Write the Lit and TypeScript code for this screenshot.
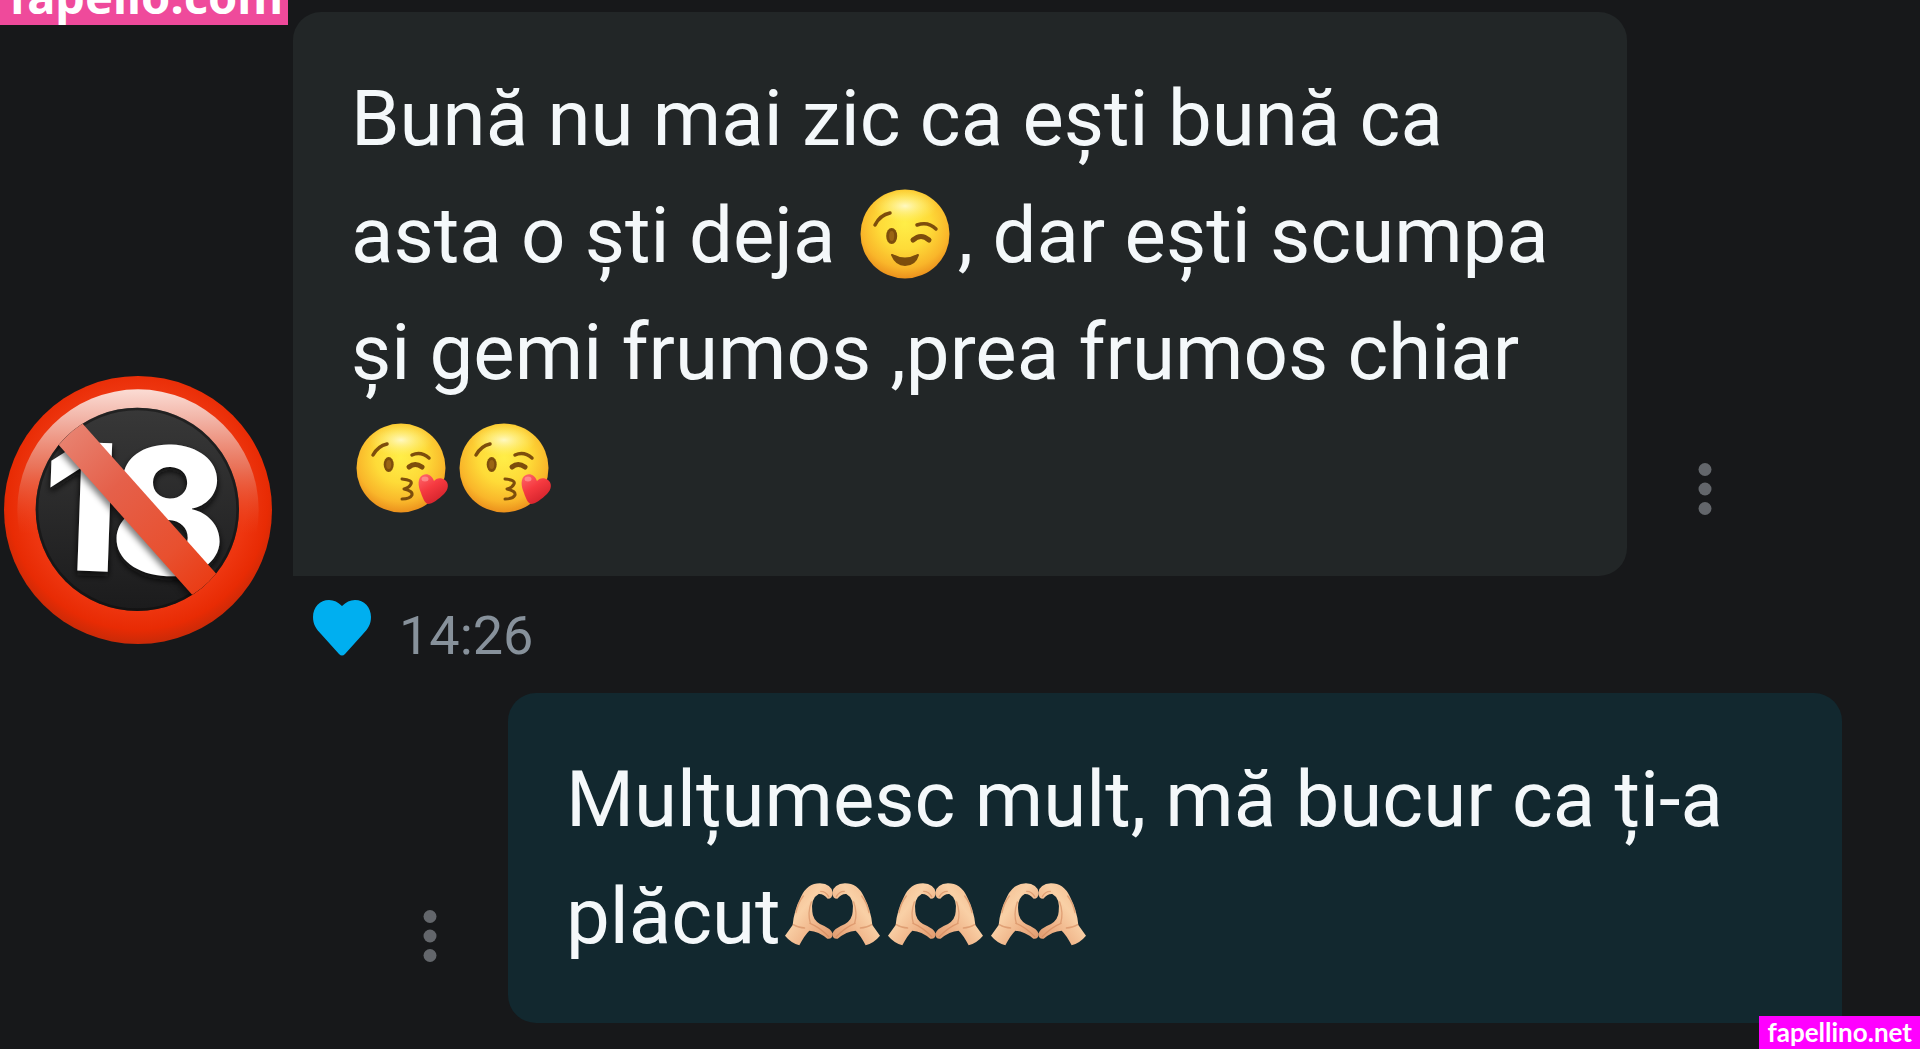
import { LitElement, html, css, svg, nothing } from "lit";
import { customElement, property } from "lit/decorators.js";

const faceFill = svg`
  <defs>
    <radialGradient id="face" cx="50%" cy="38%" r="64%">
      <stop offset="0" stop-color="#ffee48"></stop>
      <stop offset=".45" stop-color="#fedb38"></stop>
      <stop offset=".78" stop-color="#f9b62a"></stop>
      <stop offset="1" stop-color="#e98a1a"></stop>
    </radialGradient>
    <radialGradient id="shine" cx="50%" cy="50%" r="50%">
      <stop offset="0" stop-color="#fffbd0" stop-opacity=".9"></stop>
      <stop offset="1" stop-color="#fff27a" stop-opacity="0"></stop>
    </radialGradient>
  </defs>
  <circle cx="50" cy="45" r="44.5" fill="url(#face)"></circle>
  <ellipse cx="50" cy="17" rx="32" ry="16" fill="url(#shine)"></ellipse>`;

const wink = html`<svg class="emoji" viewBox="0 0 103 90" role="img" aria-label="😉">
  ${faceFill}
  <g fill="none" stroke="#7d4d0c" stroke-width="3.500" stroke-linecap="round">
    <path d="M20 36Q25 26 35 24"></path>
    <path d="M62 36Q73 32 81 40"></path>
    <path stroke-width="5" d="M58 51Q66 44 74 51"></path>
  </g>
  <ellipse cx="36.700" cy="47" rx="5.500" ry="8" fill="#7d4d0c"></ellipse>
  <ellipse cx="36.700" cy="47" rx="2.500" ry="5" fill="#9a6414"></ellipse>
  <path d="M37 66Q50 73 63 66Q60 76 50 76Q41 76 37 66Z" fill="#7d4d0c" stroke="#7d4d0c" stroke-width="2" stroke-linejoin="round"></path>
</svg>`;

const kiss = html`<svg class="emoji" viewBox="0 0 103 90" role="img" aria-label="😘">
  ${faceFill}
  <defs>
    <linearGradient id="love" x1="0" y1="0" x2=".6" y2="1">
      <stop offset="0" stop-color="#ff6a6e"></stop>
      <stop offset=".5" stop-color="#f5393f"></stop>
      <stop offset="1" stop-color="#d3222b"></stop>
    </linearGradient>
  </defs>
  <g fill="none" stroke="#7d4d0c" stroke-width="3.500" stroke-linecap="round">
    <path d="M22 32Q27 23 36 21"></path>
    <path d="M61 32Q70 28 78 35"></path>
    <path stroke-width="5" d="M58 44Q64 39 71 44"></path>
    <path stroke-width="3" stroke-linejoin="round" d="M51 56Q62 57 60 61Q58 65 53 66Q62 68 61 72Q59 76 51 76"></path>
  </g>
  <ellipse cx="37.700" cy="41.500" rx="5" ry="7.500" fill="#7d4d0c"></ellipse>
  <ellipse cx="37.700" cy="41.500" rx="2.500" ry="4.500" fill="#9a6414"></ellipse>
  <path fill="url(#love)" d="M83 58C81 52 76 50 72 52C66 55 67 63 70 70C72 76 74 80 77 81C81 81 88 76 93 71C98 66 98 60 94 57C90 54 85 55 83 58Z"></path>
  <ellipse cx="74" cy="56" rx="3.500" ry="2.500" fill="#ff9a98" opacity=".7"></ellipse>
</svg>`;

const hand = svg`
  <path fill="url(#skin)" d="M45 227L68 195Q72 150 93 110Q112 70 150 70Q184 72 188 98Q188 116 173 116Q161 101 146 102Q122 115 127 155Q128 178 150 192Q184 206 188 221Q188 238 172 236Q146 214 118 212Q104 225 88 256Q62 248 45 227Z"></path>
  <g fill="none" stroke="#cf8256" stroke-linecap="round" stroke-width="4" opacity=".55">
    <path d="M70 194Q86 204 104 204"></path>
    <path d="M124 126Q112 158 121 190"></path>
    <path d="M152 94Q168 94 176 110"></path>
    <path d="M120 190Q150 202 176 230"></path>
    <path d="M78 158Q84 128 100 108"></path>
  </g>`;

const heartHands = html`<svg class="emoji" viewBox="0 0 103 90" role="img" aria-label="🫶🏻">
  <defs>
    <linearGradient id="skin" x1="0" y1="0" x2="1" y2="1">
      <stop offset="0" stop-color="#efb486"></stop>
      <stop offset=".4" stop-color="#f9d0a6"></stop>
      <stop offset=".65" stop-color="#f0b68b"></stop>
      <stop offset="1" stop-color="#dd966a"></stop>
    </linearGradient>
  </defs>
  <g transform="translate(-11 -10) scale(.3333)">
    ${hand}
    <g transform="translate(375 0) scale(-1 1)">${hand}</g>
  </g>
</svg>`;

const adultsOnly = html`<svg class="avatar" viewBox="12 50 804 804" role="img" aria-label="18+">
  <defs>
    <radialGradient id="ring" cx="50%" cy="46%" r="54%">
      <stop offset=".75" stop-color="#ee3610"></stop>
      <stop offset=".9" stop-color="#e82b04"></stop>
      <stop offset="1" stop-color="#c92a08"></stop>
    </radialGradient>
    <linearGradient id="gloss" x1="0" y1="0" x2="0" y2="1">
      <stop offset="0" stop-color="#fbdcd4"></stop>
      <stop offset=".12" stop-color="#f2b5a8"></stop>
      <stop offset=".32" stop-color="#e97a62" stop-opacity=".9"></stop>
      <stop offset=".6" stop-color="#ea4a26" stop-opacity="0"></stop>
    </linearGradient>
    <linearGradient id="pit" x1="0" y1="0" x2="0" y2="1">
      <stop offset="0" stop-color="#383838"></stop>
      <stop offset="1" stop-color="#1b1b1c"></stop>
    </linearGradient>
    <linearGradient id="bar" gradientUnits="userSpaceOnUse" x1="200" y1="210" x2="630" y2="690">
      <stop offset="0" stop-color="#e88371"></stop>
      <stop offset=".35" stop-color="#e5604a"></stop>
      <stop offset=".75" stop-color="#e8502f"></stop>
      <stop offset="1" stop-color="#ea3a12"></stop>
    </linearGradient>
    <filter id="soft" x="-20%" y="-20%" width="140%" height="140%">
      <feGaussianBlur stdDeviation="9"></feGaussianBlur>
    </filter>
    <clipPath id="hole"><circle cx="412" cy="450" r="305"></circle></clipPath>
  </defs>
  <circle cx="414" cy="452" r="402" fill="url(#ring)"></circle>
  <circle cx="414" cy="452" r="362" fill="url(#gloss)"></circle>
  <circle cx="412" cy="450" r="305" fill="url(#pit)"></circle>
  <circle cx="412" cy="450" r="301" fill="none" stroke="#0c0c0c" stroke-width="8" opacity=".5"></circle>
  <g class="age">
    <text x="126" y="648" fill="#0a0a0a" filter="url(#soft)" transform="rotate(2 240 440)">1</text>
    <text x="332" y="656" fill="#0a0a0a" filter="url(#soft)" transform="rotate(2 510 440)">8</text>
    <text x="126" y="634" fill="#fff" transform="rotate(2 240 440)">1</text>
    <text x="332" y="646" fill="#fff" transform="rotate(2 510 440)">8</text>
  </g>
  <g clip-path="url(#hole)">
    <path d="M178 232L645 756" stroke="#000" stroke-width="60" opacity=".5" filter="url(#soft)"></path>
    <path d="M178 187L645 711" stroke="url(#bar)" stroke-width="96"></path>
  </g>
</svg>`;

@customElement("chat-message")
class ChatMessage extends LitElement {
  @property({ type: Boolean, reflect: true }) outgoing = false;
  @property() time = "";

  static styles = css`
    :host {
      display: flex;
      align-items: flex-end;
      gap: 21px;
    }
    :host([outgoing]) {
      justify-content: flex-end;
    }
    .column {
      flex: 0 1 1442px;
      min-width: 0;
    }
    .line {
      display: flex;
      align-items: flex-end;
      gap: 48px;
    }
    :host([outgoing]) .line {
      flex-direction: row-reverse;
    }
    .bubble {
      flex: 1;
      min-width: 0;
      box-sizing: border-box;
      padding: 48px 58px;
      border-radius: 28px 28px 28px 0;
      background: #222627;
    }
    :host([outgoing]) .bubble {
      border-radius: 28px 28px 0 28px;
      background: #12282f;
    }
    .more {
      flex: none;
      display: grid;
      place-items: center;
      width: 60px;
      height: 60px;
      margin: 0 0 57px;
      padding: 0;
      border: 0;
      background: none;
      color: #63666b;
    }
    .more svg {
      width: 14px;
      height: 54px;
      fill: currentColor;
    }
    .meta {
      display: flex;
      align-items: flex-end;
      gap: 28px;
      margin-top: 24px;
      padding-left: 20px;
    }
    .like {
      margin: 0 0 12px;
      padding: 0;
      border: 0;
      background: none;
      color: #00aff0;
    }
    .like svg {
      display: block;
      width: 58px;
      height: 56px;
      fill: currentColor;
    }
    time {
      font-size: 54px;
      line-height: 64px;
      color: #87919b;
    }
  `;

  render() {
    return html`
      <slot name="avatar"></slot>
      <div class="column">
        <div class="line">
          <div class="bubble"><slot></slot></div>
          <button class="more" type="button" aria-label="Opțiuni">
            <svg viewBox="0 0 14 54" aria-hidden="true">
              <circle cx="7" cy="7.500" r="6.500"></circle>
              <circle cx="7" cy="27" r="6.500"></circle>
              <circle cx="7" cy="46.500" r="6.500"></circle>
            </svg>
          </button>
        </div>
        ${this.time
          ? html`<div class="meta">
              <button class="like" type="button" aria-label="Îmi place">
                <svg viewBox="0 0 58 56" aria-hidden="true">
                  <path d="M29 6C25 2 21 0 16 0C7 0 0 7 0 17C0 24 3 29 8 34L26 54Q29 57 32 54L50 34C55 29 58 24 58 17C58 7 51 0 42 0C37 0 33 2 29 6Z"></path>
                </svg>
              </button>
              <time>${this.time}</time>
            </div>`
          : nothing}
      </div>
    `;
  }
}

@customElement("app-root")
class AppRoot extends LitElement {
  static styles = css`
    :host {
      display: block;
      position: relative;
      box-sizing: border-box;
      min-height: 100vh;
      overflow: hidden;
      background: #17181a;
      color: #f4f8fa;
      font-family: Roboto, "Liberation Sans", sans-serif;
    }
    .chat {
      display: flex;
      flex-direction: column;
      gap: 25px;
      padding: 12px 78px 24px 4px;
    }
    p {
      margin: 0;
      font-size: 78px;
      line-height: 117px;
    }
    .avatar {
      display: block;
      width: 268px;
      height: 268px;
      margin-bottom: 24px;
    }
    .age {
      font-family: Inter, "Liberation Sans", sans-serif;
      font-size: 530px;
      font-weight: 800;
    }
    .together {
      white-space: nowrap;
    }
    .emoji {
      width: 103px;
      height: 90px;
      vertical-align: -17px;
    }
    .tag {
      position: absolute;
      color: #fff;
      font-weight: 700;
      text-decoration: none;
      white-space: nowrap;
    }
    .tag-top {
      top: 0;
      left: 0;
      display: flex;
      align-items: flex-end;
      box-sizing: border-box;
      width: 288px;
      height: 25px;
      padding-left: 9px;
      overflow: hidden;
      background: #ef4a9b;
      font-family: "Noto Sans", "Open Sans", sans-serif;
      font-size: 47px;
      line-height: 58px;
    }
    .tag-bottom {
      right: 0;
      bottom: 0;
      padding: 0 8px;
      background: #ff00ff;
      font-family: Lato, sans-serif;
      font-size: 26px;
      line-height: 33px;
    }
  `;

  render() {
    return html`
      <main class="chat">
        <chat-message time="14:26">
          <div slot="avatar">${adultsOnly}</div>
          <p>
            Bună nu mai zic ca ești bună ca asta o ști deja
            <span class="together">${wink},</span> dar ești scumpa și gemi
            frumos ,prea frumos chiar
            <span class="together">${kiss}${kiss}</span>
          </p>
        </chat-message>
        <chat-message outgoing>
          <p>
            Mulțumesc mult, mă bucur ca ți-a
            <span class="together">plăcut${heartHands}${heartHands}${heartHands}</span>
          </p>
        </chat-message>
      </main>
      <a class="tag tag-top" href="#top">fapello.com</a>
      <a class="tag tag-bottom" href="#site">fapellino.net</a>
    `;
  }
}
